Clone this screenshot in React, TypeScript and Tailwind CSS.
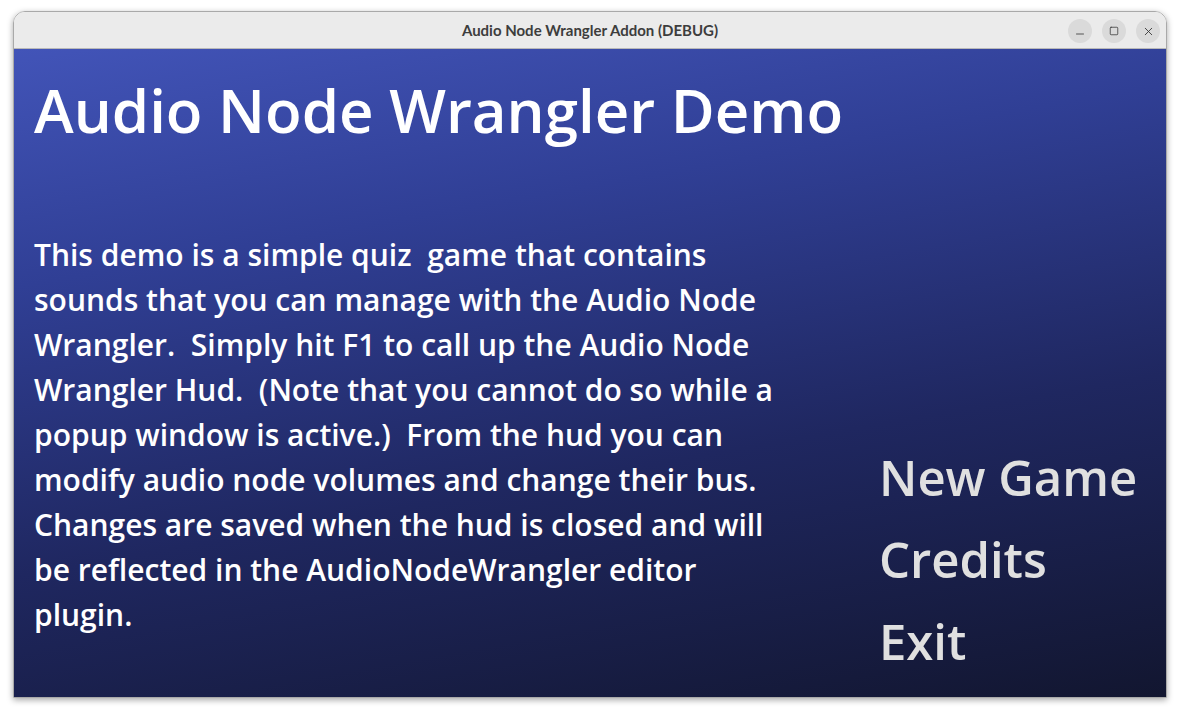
import {Minus, Square, X} from "lucide-react";

const lines = [
    "This demo is a simple quiz  game that contains",
    "sounds that you can manage with the Audio Node",
    "Wrangler.  Simply hit F1 to call up the Audio Node",
    "Wrangler Hud.  (Note that you cannot do so while a",
    "popup window is active.)  From the hud you can",
    "modify audio node volumes and change their bus.",
    "Changes are saved when the hud is closed and will",
    "be reflected in the AudioNodeWrangler editor",
    "plugin.",
];

function TitleBar() {
    return <div className="relative h-[37px] shrink-0 bg-[#ebebeb] border-b border-[#b9b9b9] rounded-t-[11px] flex items-center justify-center">
        <p className="font-['Lato','Noto_Sans',sans-serif] font-bold text-[15px] text-[#3d3d3d]">
            Audio Node Wrangler Addon (DEBUG)
        </p>
        <div className="absolute right-[6px] top-[7px] flex gap-[10px]">
            <button className="w-[24px] h-[24px] rounded-full bg-[#dadada] flex items-center justify-center text-[#333]">
                <Minus size={12} strokeWidth={1.6} className="mt-[6px]" />
            </button>
            <button className="w-[24px] h-[24px] rounded-full bg-[#dadada] flex items-center justify-center text-[#333]">
                <Square size={10} strokeWidth={1.8} />
            </button>
            <button className="w-[24px] h-[24px] rounded-full bg-[#dadada] flex items-center justify-center text-[#333]">
                <X size={13} strokeWidth={1.6} />
            </button>
        </div>
    </div>
}

function App() {
    return <div className="w-[1180px] h-[714px] bg-white pt-[11px] px-[13px] overflow-hidden">
        <div className="w-[1154px] h-[687px] flex flex-col rounded-t-[12px] border border-[#a9a9a9] shadow-[0_2px_6px_rgba(0,0,0,0.35)]">
            <TitleBar />
            <div className="flex-1 flex bg-[linear-gradient(170deg,#4254b8_0%,#303f95_28%,#1f2760_62%,#121630_100%)] font-['Open_Sans',sans-serif]">
                <div className="w-[845px] pl-[20px] pt-[31px]">
                    <h1 className="text-[60px] leading-[60px] font-semibold text-white whitespace-nowrap">
                        Audio Node Wrangler Demo
                    </h1>
                    <div className="mt-[92px] text-[30px] leading-[45px] font-semibold text-white">
                        {lines.map((l, i) => <p key={i} className="whitespace-pre">{l}</p>)}
                    </div>
                </div>
                <div className="flex-1 flex flex-col justify-end pb-[15px] pl-[20px]">
                    {["New Game", "Credits", "Exit"].map((m) =>
                        <p key={m} className="text-[49px] leading-[82px] text-[#e0e0e0] font-semibold">{m}</p>
                    )}
                </div>
            </div>
        </div>
    </div>
}

export default App;
